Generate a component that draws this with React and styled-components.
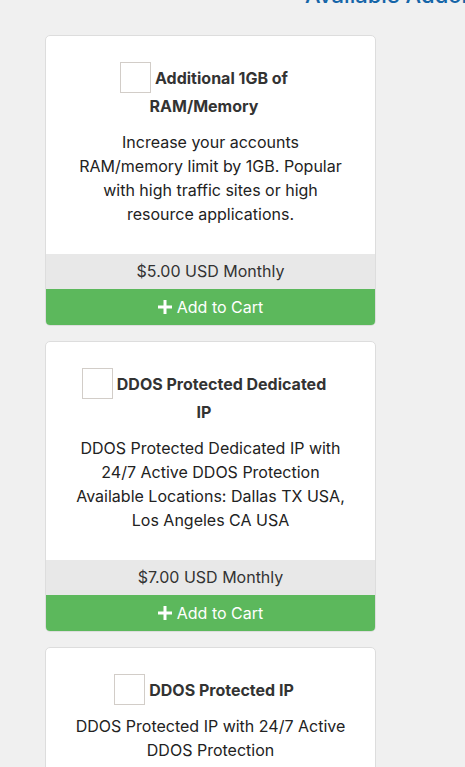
import React from 'react';
import styled, { createGlobalStyle } from 'styled-components';

const GlobalStyle = createGlobalStyle`
  html, body {
    margin: 0;
    padding: 0;
    background: #f0f0f0;
    font-family: Inter, "Noto Sans", sans-serif;
    color: #333;
  }
`;

const Page = styled.div({
  padding: '0 0 20px 45px',
  width: '331px',
});

const HeadingClip = styled.div({
  height: '6px',
  overflow: 'hidden',
  marginLeft: '260px',
  width: '160px',
  marginBottom: '29px',
});

const Heading = styled.h3({
  margin: '-17px 0 0 0',
  fontSize: '22px',
  lineHeight: '24px',
  fontWeight: 500,
  color: '#1565a8',
  whiteSpace: 'nowrap',
});

const List = styled.div({
  display: 'flex',
  flexDirection: 'column',
  gap: '15px',
});

const Card = styled.div({
  background: '#fff',
  border: '1px solid #ddd',
  borderRadius: '5px',
  overflow: 'hidden',
  display: 'flex',
  flexDirection: 'column',
});

const Body = styled.div({
  padding: '28px 0 28px',
  textAlign: 'center',
});

const Title = styled.label({
  display: 'block',
  padding: '0 45px 0 32px',
  fontSize: '16px',
  lineHeight: '28px',
  fontWeight: 700,
  color: '#333',
});

const Check = styled.span({
  display: 'inline-block',
  width: '29px',
  height: '29px',
  border: '1px solid #d2cdc8',
  background: '#fff',
  verticalAlign: 'middle',
  margin: '-6px 4px -4px 0',
  position: 'relative',
  top: '-1px',
});

const Desc = styled.p({
  margin: '10px 0 0',
  padding: '0 26px',
  fontSize: '16px',
  lineHeight: '24px',
  color: '#222',
});

const Price = styled.div({
  height: '35px',
  lineHeight: '35px',
  background: '#e8e8e8',
  textAlign: 'center',
  fontSize: '16px',
  color: '#333',
});

const CartButton = styled.button({
  height: '36px',
  border: 'none',
  background: '#5cb85c',
  color: '#fff',
  fontFamily: 'Inter, "Noto Sans", sans-serif',
  fontSize: '16px',
  display: 'flex',
  alignItems: 'center',
  justifyContent: 'center',
  gap: '5px',
  cursor: 'pointer',
  padding: 0,
});

const PlusIcon = () => (
  <svg width="14" height="14" viewBox="0 0 14 14">
    <path d="M5.5 0h3v5.5H14v3H8.5V14h-3V8.5H0v-3h5.5z" fill="#fff" />
  </svg>
);

const addons = [
  {
    name: 'Additional 1GB of RAM/Memory',
    desc: 'Increase your accounts RAM/memory limit by 1GB. Popular with high traffic sites or high resource applications.',
    price: '$5.00 USD Monthly',
  },
  {
    name: 'DDOS Protected Dedicated IP',
    desc: 'DDOS Protected Dedicated IP with 24/7 Active DDOS Protection Available Locations: Dallas TX USA, Los Angeles CA USA',
    price: '$7.00 USD Monthly',
  },
  {
    name: 'DDOS Protected IP',
    desc: 'DDOS Protected IP with 24/7 Active DDOS Protection',
    price: '$5.00 USD Monthly',
  },
];

export default function App() {
  return (
    <Page>
      <GlobalStyle />
      <HeadingClip>
        <Heading>Available Addons</Heading>
      </HeadingClip>
      <List>
        {addons.map(a => (
          <Card key={a.name}>
            <Body>
              <Title>
                <Check />
                {a.name}
              </Title>
              <Desc>{a.desc}</Desc>
            </Body>
            <Price>{a.price}</Price>
            <CartButton type="button">
              <PlusIcon />
              Add to Cart
            </CartButton>
          </Card>
        ))}
      </List>
    </Page>
  );
}
